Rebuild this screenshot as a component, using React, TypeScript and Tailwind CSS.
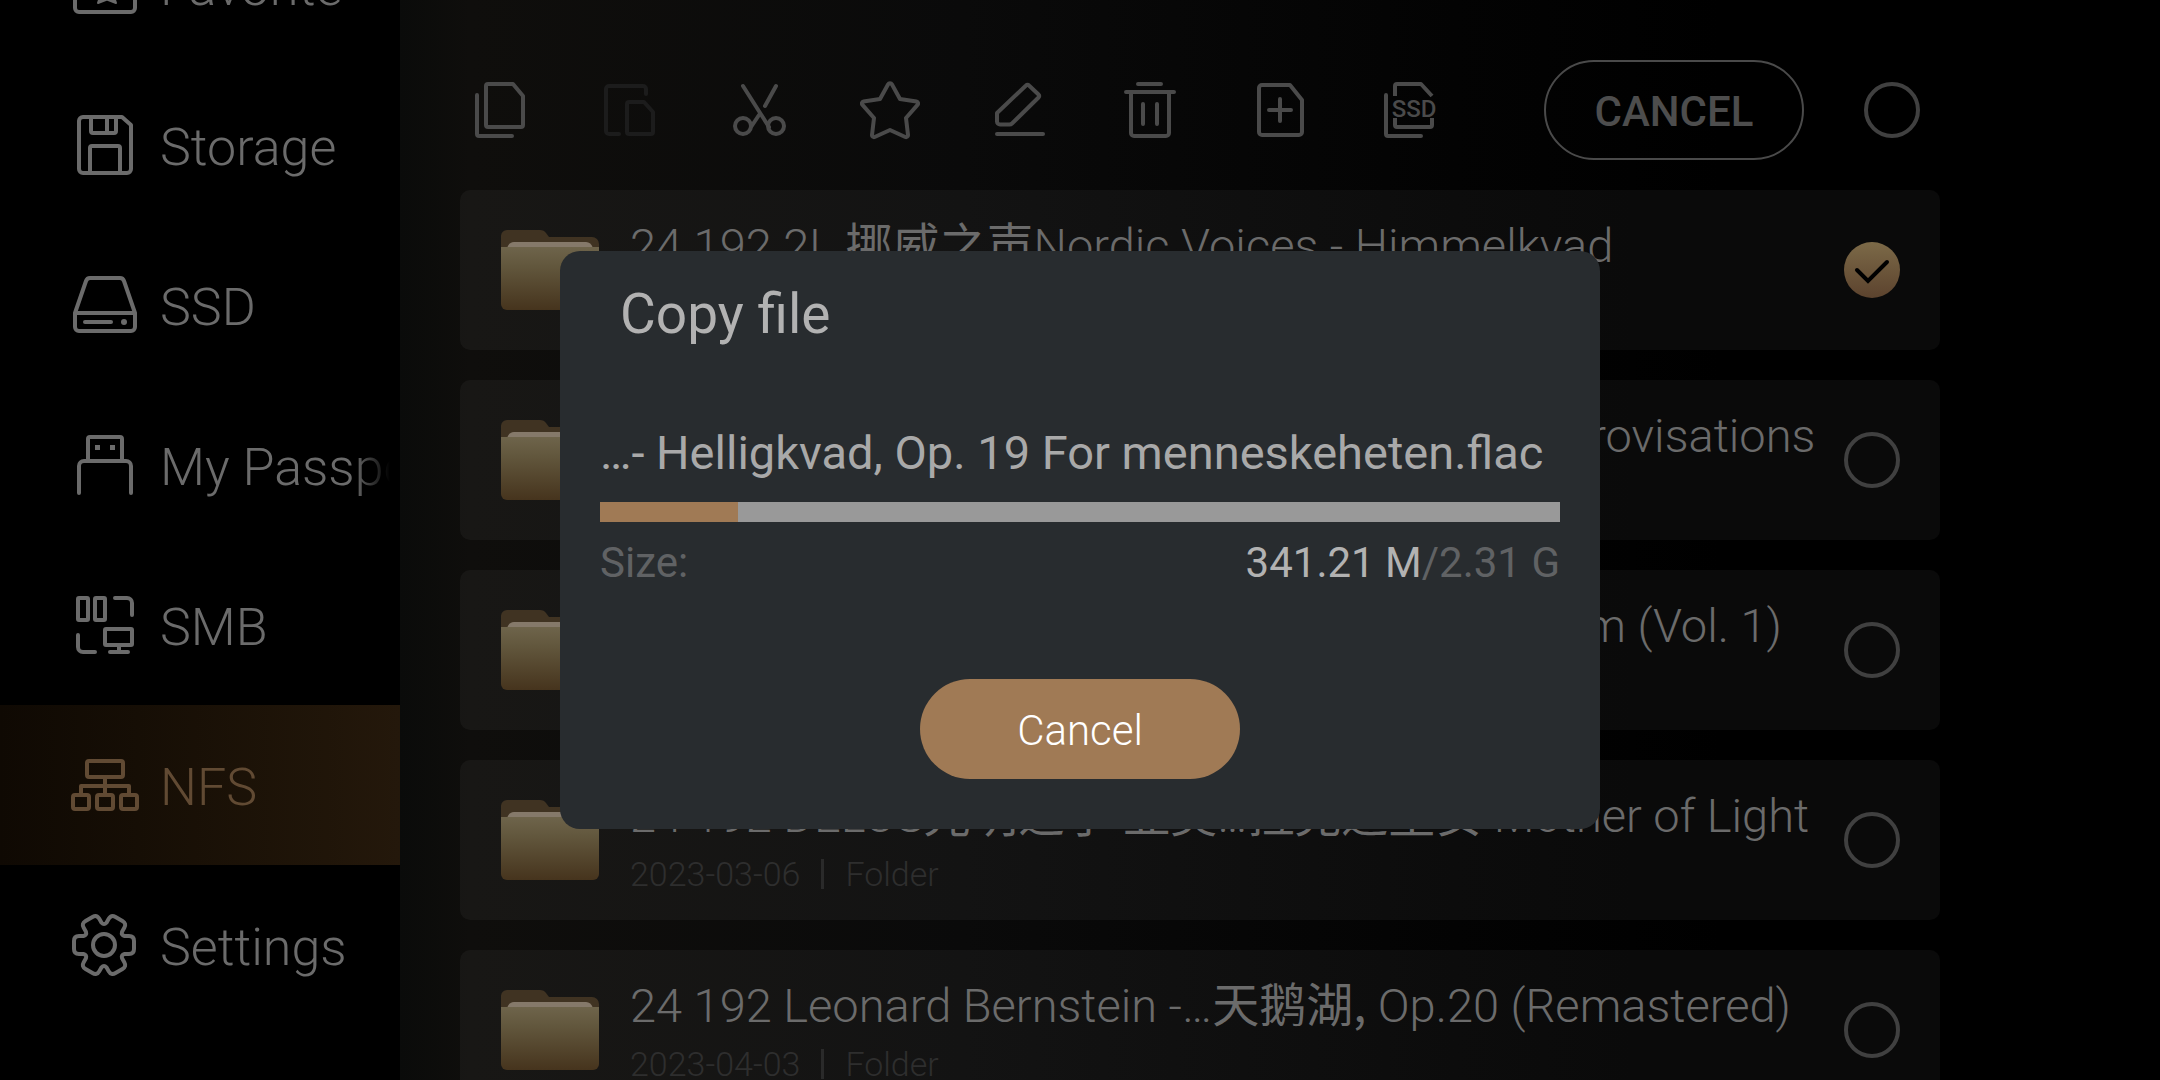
import React, { useState } from 'react'

type IconProps = { className?: string }

const SideIcon: React.FC<{ children: React.ReactNode }> = ({ children }) => (
  <svg
    viewBox="0 0 72 72"
    className="size-[72px] shrink-0"
    fill="none"
    stroke="currentColor"
    strokeWidth="4"
    strokeLinecap="round"
    strokeLinejoin="round"
    aria-hidden="true"
  >
    {children}
  </svg>
)

const ToolIcon: React.FC<{ children: React.ReactNode }> = ({ children }) => (
  <svg
    viewBox="0 0 60 60"
    className="size-[60px]"
    fill="none"
    stroke="currentColor"
    strokeWidth="4"
    strokeLinecap="round"
    strokeLinejoin="round"
    aria-hidden="true"
  >
    {children}
  </svg>
)

// one tooth of the gear, repeated every 60 degrees
const gearPath = () => {
  const tooth = [
    [20.5, -9],
    [25, -9],
    [30, -9],
    [30, -4],
    [30, 4],
    [30, 9],
    [25, 9],
    [20.5, 9],
    [17, 9.8],
  ]
  let d = ''
  for (let i = 0; i < 6; i++) {
    const a = (i * Math.PI) / 3
    const p = tooth.map(
      ([x, y]) =>
        `${(35 + x * Math.cos(a) - y * Math.sin(a)).toFixed(2)} ${(
          36 +
          x * Math.sin(a) +
          y * Math.cos(a)
        ).toFixed(2)}`
    )
    d += `${i === 0 ? 'M' : ''}${p[0]}L${p[1]}Q${p[2]} ${p[3]}L${p[4]}Q${p[5]} ${p[6]}L${p[7]}Q${p[8]} `
  }
  return `${d}${35 + 20.5} ${36 - 9}Z`
}

const sideItems = [
  {
    name: 'Favorite',
    icon: (
      <>
        <path d="M10 9h20l6 7h26a4 4 0 0 1 4 4v39a4 4 0 0 1-4 4H10a4 4 0 0 1-4-4V13a4 4 0 0 1 4-4Z" />
        <path
          d="M38 30l3.600 8 8.400 1-6 6 3 9-9-3.500-9 3.500 3-9-6-6 8.400-1Z"
          fill="currentColor"
          strokeWidth="2"
        />
      </>
    ),
  },
  {
    name: 'Storage',
    icon: (
      <>
        <path d="M14 8h39l9 8v44a4 4 0 0 1-4 4H14a4 4 0 0 1-4-4V12a4 4 0 0 1 4-4Z" />
        <path d="M22 8v14a2 2 0 0 0 2 2h21a2 2 0 0 0 2-2V8M38 8v16" />
        <path d="M21 64V39a2 2 0 0 1 2-2h26a2 2 0 0 1 2 2v25" />
      </>
    ),
  },
  {
    name: 'SSD',
    icon: (
      <>
        <path d="M6 44L17 12q1-3 4-3h30q3 0 4 3L66 44v14a4 4 0 0 1-4 4H10a4 4 0 0 1-4-4ZM6 44h60" />
        <path d="M16 53h26" />
        <circle cx="55" cy="53" r="3" fill="currentColor" stroke="none" />
      </>
    ),
  },
  {
    name: 'My Passport',
    icon: (
      <>
        <path d="M19 32V10a2 2 0 0 1 2-2h30a2 2 0 0 1 2 2v22" />
        <path d="M10 64V37a5 5 0 0 1 5-5h42a5 5 0 0 1 5 5v27" />
        <path
          d="M26 16h5v5h-5ZM41 16h5v5h-5Z"
          fill="currentColor"
          stroke="none"
        />
      </>
    ),
  },
  {
    name: 'SMB',
    icon: (
      <>
        <rect x="9" y="9" width="10" height="22" rx="1" />
        <rect x="26" y="9" width="10" height="22" rx="1" />
        <path d="M46 9h12a5 5 0 0 1 5 5v12M9 46v12a5 5 0 0 0 5 5h12" />
        <rect x="36" y="40" width="27" height="16" rx="1" />
        <path d="M50 56v7M41 63h18" />
      </>
    ),
  },
  {
    name: 'NFS',
    icon: (
      <>
        <rect x="18" y="12" width="36" height="16" rx="2" />
        <path d="M36 28v18M12 46v-9h48v9" />
        <rect x="4" y="46" width="16" height="14" rx="2" />
        <rect x="28" y="46" width="16" height="14" rx="2" />
        <rect x="52" y="46" width="16" height="14" rx="2" />
      </>
    ),
  },
  {
    name: 'Settings',
    icon: (
      <>
        <path d={gearPath()} />
        <circle cx="35" cy="36" r="11" />
      </>
    ),
  },
]

const tools = [
  {
    name: 'Copy',
    icon: (
      <>
        <path d="M18 4h25l10 12v29a2 2 0 0 1-2 2H18a2 2 0 0 1-2-2V6a2 2 0 0 1 2-2Z" />
        <path d="M7 15v39a2 2 0 0 0 2 2h33" />
      </>
    ),
  },
  {
    name: 'Paste',
    disabled: true,
    icon: (
      <>
        <path d="M46 14V9a3 3 0 0 0-3-3H9a3 3 0 0 0-3 3v42a3 3 0 0 0 3 3h10" />
        <path d="M29 22h15l9 10v20a2 2 0 0 1-2 2H29a2 2 0 0 1-2-2V24a2 2 0 0 1 2-2Z" />
      </>
    ),
  },
  {
    name: 'Cut',
    icon: (
      <>
        <circle cx="13" cy="46" r="8" />
        <circle cx="46" cy="46" r="8" />
        <path d="M13 6l26 41M46 6L35 26M29 35l-8 12" />
      </>
    ),
  },
  {
    name: 'Favorite',
    icon: (
      <path d="M28 4.500a2.300 2.300 0 0 1 4 0L40 19l16.500 2.500a2 2 0 0 1 1 3.400L46 38l2 17a2 2 0 0 1-2.700 2L30 50l-15.300 7a2 2 0 0 1-2.700-2l2-17L2.500 24.900a2 2 0 0 1 1-3.400L20 19Z" />
    ),
  },
  {
    name: 'Rename',
    icon: (
      <>
        <path d="M7 33L36 5.500q1.500-1.500 3 0l9.500 9q1.500 1.500 0 3L22 43.500q-1 1-2.500 1H10a3 3 0 0 1-3-3Z" />
        <path d="M7 54h46" />
      </>
    ),
  },
  {
    name: 'Delete',
    icon: (
      <path d="M18 4h23M6 12h48M11 12v41a3 3 0 0 0 3 3h32a3 3 0 0 0 3-3V12M23 24v20M37 24v20" />
    ),
  },
  {
    name: 'New file',
    icon: (
      <>
        <path d="M12 5h28l12 15v32a3 3 0 0 1-3 3H12a3 3 0 0 1-3-3V8a3 3 0 0 1 3-3Z" />
        <path d="M30 19v22M19 30h22" />
      </>
    ),
  },
  {
    name: 'Copy to SSD',
    icon: (
      <>
        <path d="M6 15v39a2 2 0 0 0 2 2h33" />
        <path
          d="M15 16V6a2 2 0 0 1 2-2h24l11 12M15 38v7a2 2 0 0 0 2 2h33a2 2 0 0 0 2-2v-7"
          strokeLinecap="butt"
        />
        <text
          x="34"
          y="37"
          textAnchor="middle"
          className="text-[24px] font-medium"
          fill="currentColor"
          stroke="none"
        >
          SSD
        </text>
      </>
    ),
  },
]

const FolderIcon: React.FC<IconProps> = ({ className }) => (
  <svg viewBox="0 0 100 80" className={className} aria-hidden="true">
    <defs>
      <linearGradient id="folder" x1="0" y1="0" x2="0" y2="1">
        <stop offset="0" stopColor="#6e644b" />
        <stop offset="0.3" stopColor="#62573d" />
        <stop offset="1" stopColor="#46341d" />
      </linearGradient>
    </defs>
    <path
      d="M7 0h33q4 0 6 3l3 4h43a7 7 0 0 1 7 7v20H1V6a6 6 0 0 1 6-6Z"
      fill="#403322"
    />
    <path d="M7 18q2-6 7-6h72q5 0 7 6Z" fill="#85796a" />
    <path d="M1 17h98v57a6 6 0 0 1-6 6H7a6 6 0 0 1-6-6Z" fill="url(#folder)" />
  </svg>
)

const Cjk: React.FC<{ children: React.ReactNode }> = ({ children }) => (
  <span
    lang="zh-CN"
    className="font-['Noto_Sans_CJK_SC',sans-serif] leading-none font-normal"
  >
    {children}
  </span>
)

const folders = [
  {
    id: 'nordic',
    date: '2023-03-06',
    title: (
      <>
        24 192 2L <Cjk>挪威之声</Cjk>Nordic Voices - Himmelkvad
      </>
    ),
  },
  {
    id: 'improvisations',
    date: '2023-03-06',
    title: <>24 192 ACT Michael Wollny -…Seven Piano Improvisations</>,
  },
  {
    id: 'vol1',
    date: '2023-03-06',
    title: <>24 192 Alpha 1 Bach -…Das Orgelbüchlein Album (Vol. 1)</>,
  },
  {
    id: 'light',
    date: '2023-03-06',
    title: (
      <>
        24 192 DELOS<Cjk>光明之子</Cjk> <Cjk>亚美</Cjk>…<Cjk>拉克达里安</Cjk>{' '}
        Mother of Light
      </>
    ),
  },
  {
    id: 'bernstein',
    date: '2023-04-03',
    title: (
      <>
        24 192 Leonard Bernstein -…<Cjk>天鹅湖,</Cjk> Op.20 (Remastered)
      </>
    ),
  },
]

const Tick: React.FC<{
  label: string
  checked: boolean
  onChange: () => void
}> = ({ label, checked, onChange }) => (
  <label className="relative block size-14 shrink-0">
    <input
      type="checkbox"
      aria-label={label}
      checked={checked}
      onChange={onChange}
      className="block size-14 appearance-none rounded-full border-4 border-[#404040] checked:border-0 checked:bg-linear-to-b checked:from-[#7c6a48] checked:to-[#5c432e]"
    />
    {checked && (
      <svg
        viewBox="0 0 56 56"
        className="pointer-events-none absolute inset-0"
        fill="none"
        stroke="#000"
        strokeWidth="4"
        strokeLinecap="round"
        aria-hidden="true"
      >
        <path d="M13 28l11 11 19-19" />
      </svg>
    )}
  </label>
)

const COPIED = 341.21
const TOTAL = 2.31 * 1024

const App: React.FC = () => {
  const [active, setActive] = useState('NFS')
  const [selected, setSelected] = useState<string[]>(['nordic'])
  const [copying, setCopying] = useState(true)

  const toggle = (id: string) =>
    setSelected((list) =>
      list.includes(id) ? list.filter((x) => x !== id) : [...list, id]
    )

  const toggleAll = () =>
    setSelected((list) =>
      list.length === folders.length ? [] : folders.map((f) => f.id)
    )

  return (
    <div className="flex h-screen overflow-hidden bg-black font-[Roboto,'Noto_Sans_CJK_SC',sans-serif] font-light text-[#6b6b6b]">
      <nav className="flex w-[400px] shrink-0 flex-col justify-end pb-[55px]">
        {sideItems.map((item) => (
          <button
            key={item.name}
            type="button"
            onClick={() => setActive(item.name)}
            className={`flex h-40 shrink-0 items-center gap-[19px] pl-[69px] text-left text-[52px] leading-[64px] ${
              active === item.name
                ? 'bg-linear-to-r from-[#0f0903] to-[#24180b] text-[#614a33]'
                : ''
            }`}
          >
            <SideIcon>{item.icon}</SideIcon>
            <span className="w-[230px] overflow-hidden mask-r-from-84% pt-[5px] whitespace-nowrap">
              {item.name}
            </span>
          </button>
        ))}
      </nav>

      <main className="min-w-0 flex-1 bg-[linear-gradient(to_right,#0a0b0a,#0f0e0c_4%,#0a0a0a_32%,#030303_60%,#000_75%)] pt-[60px] pr-[220px] pl-[60px]">
        <div className="mb-[30px] flex items-center justify-between pr-5 pl-[10px] text-[#4a4a4a]">
          <div className="flex gap-[70px]">
            {tools.map((tool) => (
              <button
                key={tool.name}
                type="button"
                aria-label={tool.name}
                disabled={tool.disabled}
                className="disabled:text-[#1c1c1c]"
              >
                <ToolIcon>{tool.icon}</ToolIcon>
              </button>
            ))}
          </div>
          <div className="flex items-center gap-[60px]">
            <button
              type="button"
              onClick={() => setSelected([])}
              className="h-[100px] w-[260px] rounded-full border-2 border-[#4a4a4a] pt-[2px] text-[42px] font-medium text-[#4d4d4d]"
            >
              CANCEL
            </button>
            <Tick
              label="Select all"
              checked={selected.length === folders.length}
              onChange={toggleAll}
            />
          </div>
        </div>

        <ul className="flex flex-col gap-[30px]">
          {folders.map((folder) => (
            <li
              key={folder.id}
              className="flex h-40 items-center rounded-[10px] bg-white/4 px-10"
            >
              <FolderIcon className="h-20 w-[100px] shrink-0" />
              <div className="ml-[30px] min-w-0 flex-1 self-start pt-7">
                <p className="text-[47px] leading-[56px] whitespace-nowrap">
                  {folder.title}
                </p>
                <p className="mt-[10px] flex items-center gap-[21px] text-[34px] leading-10 text-[#2e2e2e]">
                  <span>{folder.date}</span>
                  <span className="h-[30px] w-[3px] bg-[#2a2a2a]" />
                  <span>Folder</span>
                </p>
              </div>
              <Tick
                label={`Select ${folder.id}`}
                checked={selected.includes(folder.id)}
                onChange={() => toggle(folder.id)}
              />
            </li>
          ))}
        </ul>
      </main>

      {copying && (
        <div className="fixed inset-0 flex items-center justify-center">
          <div
            role="dialog"
            aria-labelledby="copy-title"
            className="w-[1040px] rounded-[20px] bg-[#282c2f] px-10 pt-[31px] pb-[50px] font-normal"
          >
            <h2
              id="copy-title"
              className="pl-5 text-[55px] leading-[64px] text-[#b2b2b2]"
            >
              Copy file
            </h2>
            <p className="mt-[75px] text-[47px] leading-[64px] whitespace-nowrap text-[#a9a9a9]">
              …- Helligkvad, Op. 19 For menneskeheten.flac
            </p>
            <div
              role="progressbar"
              aria-label="Copy progress"
              aria-valuenow={Math.round((COPIED / TOTAL) * 100)}
              className="mt-[17px] h-5 bg-[#999999]"
            >
              <div
                className="h-full bg-[#a07a55]"
                style={{ width: `${(COPIED / TOTAL) * 100}%` }}
              />
            </div>
            <p className="mt-[17px] flex justify-between text-[42px] leading-[48px] text-[#606264]">
              <span>Size:</span>
              <span>
                <span className="text-[#b2b2b2]">341.21 M</span>/2.31 G
              </span>
            </p>
            <button
              type="button"
              onClick={() => setCopying(false)}
              className="mx-auto mt-[92px] block h-[100px] w-[320px] rounded-full bg-[#a07a55] pt-[2px] text-[42px] font-light text-white"
            >
              Cancel
            </button>
          </div>
        </div>
      )}
    </div>
  )
}

export default App
